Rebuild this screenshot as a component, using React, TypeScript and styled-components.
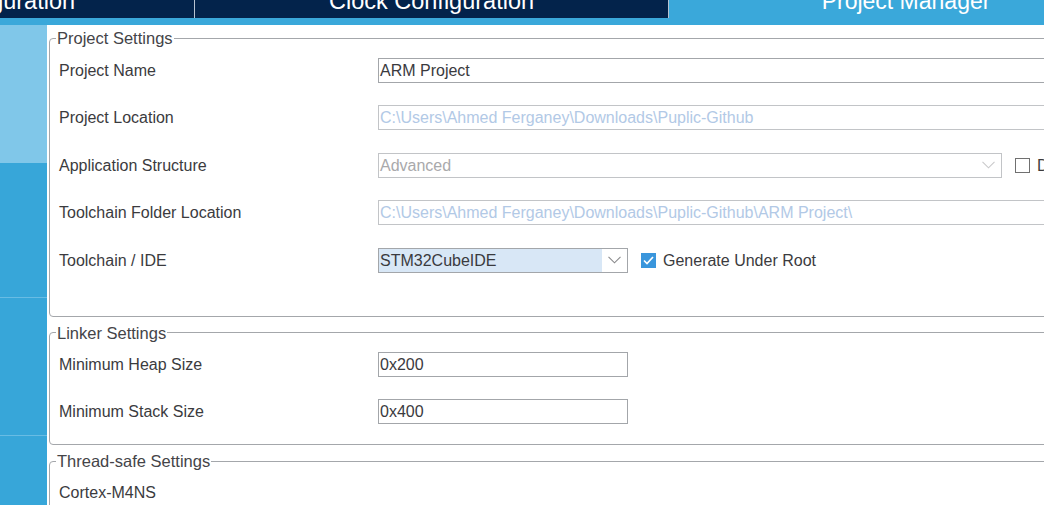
import React from "react";
import styled, { createGlobalStyle } from "styled-components";

const GlobalStyle = createGlobalStyle`
  html, body { margin: 0; padding: 0; background: #ffffff; }
  body { font-family: "Liberation Sans", Arial, sans-serif; overflow: hidden; }
  * { box-sizing: border-box; }
`;

const Page = styled.div`
  width: 1044px;
  height: 505px;
  overflow: hidden;
  display: flex;
  flex-direction: column;
  background: #fff;
`;

const Header = styled.header`
  height: 25px;
  flex: none;
  background: #3aa8da;
  overflow: hidden;
`;

const TabRow = styled.nav`
  display: flex;
  margin-left: -279px;
`;

const Tab = styled.div<{ $active?: boolean }>`
  flex: none;
  width: 474px;
  height: 18px;
  display: flex;
  justify-content: center;
  align-items: flex-start;
  color: #ffffff;
  white-space: nowrap;
  font-size: ${(p) => (p.$active ? 23 : 23.5)}px;
  line-height: 2px;
  background: ${(p) => (p.$active ? "transparent" : "#03234b")};
  border-right: ${(p) => (p.$active ? "none" : "1px solid #b7c3d1")};
`;

const Body = styled.div`
  flex: 1;
  min-height: 0;
  display: flex;
`;

const Sidebar = styled.aside`
  width: 47px;
  flex: none;
  display: flex;
  flex-direction: column;
`;

const SideItem = styled.div<{ $light?: boolean; $sep?: boolean; $h?: number }>`
  flex: ${(p) => (p.$h ? "none" : "1")};
  height: ${(p) => (p.$h ? `${p.$h}px` : "auto")};
  background: ${(p) => (p.$light ? "#80c7e9" : "#37a6d9")};
  border-top: ${(p) => (p.$sep ? "1px solid #68bce4" : "none")};
`;

const Main = styled.main`
  flex: 1;
  min-width: 0;
  padding: 4px 0 0 2px;
  display: flex;
  flex-direction: column;
  align-items: flex-start;
`;

const Group = styled.fieldset<{ $padBottom: number }>`
  flex: none;
  width: 1150px;
  min-width: 0;
  margin: 0 0 7px 0;
  padding: 0 0 ${(p) => p.$padBottom}px 6px;
  border: 1px solid #a4a7ab;
  border-radius: 4px;
`;

const Legend = styled.legend`
  padding: 0 1px;
  font-size: 16.5px;
  line-height: 18px;
  color: #444448;
`;

const Rows = styled.div<{ $padTop: number }>`
  display: flex;
  flex-direction: column;
  gap: 22.5px;
  padding: ${(p) => p.$padTop}px 0 0 3px;
`;

const Row = styled.div`
  display: flex;
  align-items: center;
  height: 25px;
  gap: 13px;
`;

const Label = styled.div`
  flex: none;
  width: 319px;
  margin-right: -13px;
  font-size: 16px;
  line-height: 25px;
  color: #3b3b3e;
  white-space: nowrap;
`;

const TextField = styled.div<{ $w: number; $disabled?: boolean }>`
  flex: none;
  width: ${(p) => p.$w}px;
  height: 25px;
  border: 1px solid ${(p) => (p.$disabled ? "#c2c4c7" : "#a3a6aa")};
  background: #fff;
  padding-left: 1px;
  font-size: 16px;
  line-height: 23px;
  color: ${(p) => (p.$disabled ? "#b2c9e6" : "#3a3a3e")};
  white-space: nowrap;
  overflow: hidden;
`;

const Select = styled.div<{ $w: number; $disabled?: boolean }>`
  flex: none;
  width: ${(p) => p.$w}px;
  height: 25px;
  border: 1px solid ${(p) => (p.$disabled ? "#c2c4c7" : "#a3a6aa")};
  background: #fff;
  display: flex;
`;

const SelectValue = styled.div<{ $disabled?: boolean; $selected?: boolean }>`
  flex: 1;
  padding-left: 1px;
  font-size: 16px;
  line-height: 23px;
  background: ${(p) => (p.$selected ? "#d8e7f6" : "transparent")};
  color: ${(p) => (p.$disabled ? "#a9a9ab" : "#3a3a3e")};
  white-space: nowrap;
  overflow: hidden;
`;

const Chevron = styled.div`
  flex: none;
  width: 25px;
  display: flex;
  align-items: center;
  justify-content: center;
`;

const CheckLabel = styled.div`
  flex: none;
  display: flex;
  align-items: center;
  gap: 7px;
  font-size: 16px;
  line-height: 25px;
  color: #3b3b3e;
  white-space: nowrap;
`;

const Box = styled.span<{ $checked?: boolean }>`
  flex: none;
  width: 15px;
  height: 15px;
  display: flex;
  align-items: center;
  justify-content: center;
  border: 1px solid ${(p) => (p.$checked ? "#3a96dc" : "#707070")};
  background: ${(p) => (p.$checked ? "#3a96dc" : "#fff")};
`;

const ChevronIcon = ({ color }: { color: string }) => (
  <svg width="13" height="8" viewBox="0 0 13 8">
    <polyline points="0.5,0.8 6.5,6.8 12.5,0.8" fill="none" stroke={color} strokeWidth="1.1" />
  </svg>
);

const CheckIcon = () => (
  <svg width="11" height="9" viewBox="0 0 11 9">
    <polyline points="1,4.5 4,7.5 10,1" fill="none" stroke="#ffffff" strokeWidth="1.7" />
  </svg>
);

export default function App() {
  return (
    <Page>
      <GlobalStyle />
      <Header>
        <TabRow>
          <Tab>Pinout &amp; Configuration</Tab>
          <Tab>Clock Configuration</Tab>
          <Tab $active>Project Manager</Tab>
        </TabRow>
      </Header>
      <Body>
        <Sidebar>
          <SideItem $light $h={138} />
          <SideItem $h={134} />
          <SideItem $sep $h={138} />
          <SideItem $sep />
        </Sidebar>
        <Main>
          <Group $padBottom={43}>
            <Legend>Project Settings</Legend>
            <Rows $padTop={10.5}>
              <Row>
                <Label>Project Name</Label>
                <TextField $w={720}>ARM Project</TextField>
              </Row>
              <Row>
                <Label>Project Location</Label>
                <TextField $w={720} $disabled>
                  C:\Users\Ahmed Ferganey\Downloads\Puplic-Github
                </TextField>
              </Row>
              <Row>
                <Label>Application Structure</Label>
                <Select $w={624} $disabled>
                  <SelectValue $disabled>Advanced</SelectValue>
                  <Chevron>
                    <ChevronIcon color="#c9c9cb" />
                  </Chevron>
                </Select>
                <CheckLabel>
                  <Box />
                  Do not generate the main()
                </CheckLabel>
              </Row>
              <Row>
                <Label>Toolchain Folder Location</Label>
                <TextField $w={720} $disabled>
                  C:\Users\Ahmed Ferganey\Downloads\Puplic-Github\ARM Project\
                </TextField>
              </Row>
              <Row>
                <Label>Toolchain / IDE</Label>
                <Select $w={250}>
                  <SelectValue $selected>STM32CubeIDE</SelectValue>
                  <Chevron>
                    <ChevronIcon color="#8a8a8c" />
                  </Chevron>
                </Select>
                <CheckLabel>
                  <Box $checked>
                    <CheckIcon />
                  </Box>
                  Generate Under Root
                </CheckLabel>
              </Row>
            </Rows>
          </Group>
          <Group $padBottom={20}>
            <Legend>Linker Settings</Legend>
            <Rows $padTop={10}>
              <Row>
                <Label>Minimum Heap Size</Label>
                <TextField $w={250}>0x200</TextField>
              </Row>
              <Row>
                <Label>Minimum Stack Size</Label>
                <TextField $w={250}>0x400</TextField>
              </Row>
            </Rows>
          </Group>
          <Group $padBottom={19}>
            <Legend>Thread-safe Settings</Legend>
            <Rows $padTop={10}>
              <Row>
                <Label>Cortex-M4NS</Label>
              </Row>
            </Rows>
          </Group>
        </Main>
      </Body>
    </Page>
  );
}
